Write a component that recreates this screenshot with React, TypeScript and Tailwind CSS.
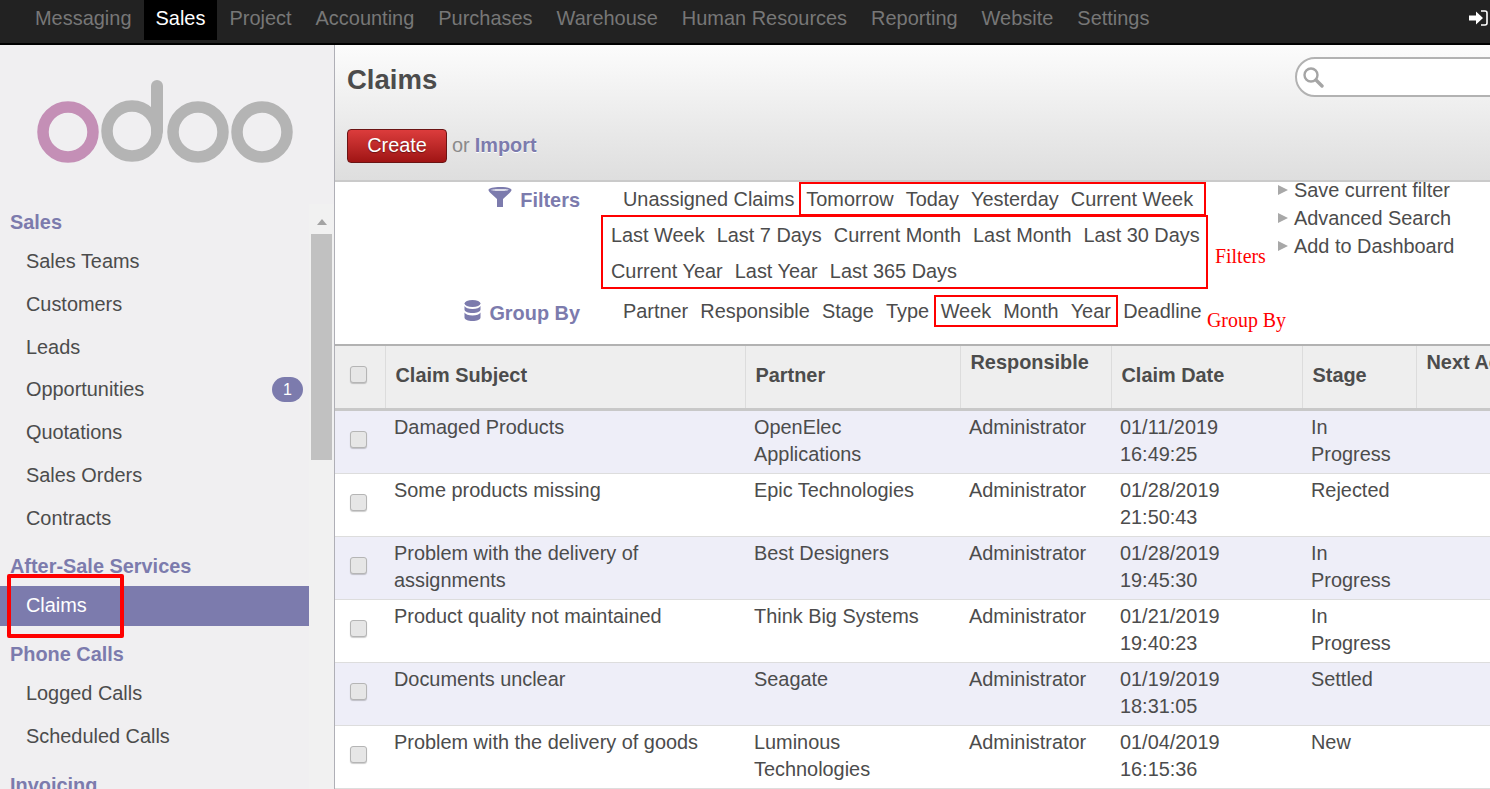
import type { ReactNode } from 'react';

const navItems = ['Messaging', 'Sales', 'Project', 'Accounting', 'Purchases', 'Warehouse', 'Human Resources', 'Reporting', 'Website', 'Settings'];

const menus = [
  { title: 'Sales', items: ['Sales Teams', 'Customers', 'Leads', 'Opportunities', 'Quotations', 'Sales Orders', 'Contracts'] },
  { title: 'After-Sale Services', items: ['Claims'] },
  { title: 'Phone Calls', items: ['Logged Calls', 'Scheduled Calls'] },
  { title: 'Invoicing', items: [] },
];

const claims = [
  ['Damaged Products', 'OpenElec Applications', 'Administrator', '01/11/2019 16:49:25', 'In Progress'],
  ['Some products missing', 'Epic Technologies', 'Administrator', '01/28/2019 21:50:43', 'Rejected'],
  ['Problem with the delivery of assignments', 'Best Designers', 'Administrator', '01/28/2019 19:45:30', 'In Progress'],
  ['Product quality not maintained', 'Think Big Systems', 'Administrator', '01/21/2019 19:40:23', 'In Progress'],
  ['Documents unclear', 'Seagate', 'Administrator', '01/19/2019 18:31:05', 'Settled'],
  ['Problem with the delivery of goods', 'Luminous Technologies', 'Administrator', '01/04/2019 16:15:36', 'New'],
];

function Checkbox() {
  return <span className="block w-[17px] h-[17px] ml-[15px] rounded-[3px] border border-[#b5b5b5] bg-[#e6e6e6] shadow-[0_1px_1px_rgba(0,0,0,0.2)]" />;
}

function Logo() {
  return (
    <svg width="270" height="100" viewBox="0 0 270 100" className="block">
      <g fill="none" strokeWidth="11.5">
        <circle cx="43" cy="58" r="25" stroke="#c48fb6" />
        <g stroke="#b4b4b4">
          <circle cx="107" cy="57" r="25" />
          <path d="M132 57V12" strokeLinecap="round" strokeWidth="12" />
          <circle cx="173" cy="58" r="25" />
          <circle cx="237" cy="58" r="25" />
        </g>
      </g>
    </svg>
  );
}

function Term({ children }: { children: ReactNode }) {
  return <span className="whitespace-nowrap">{children}</span>;
}

function Terms({ items }: { items: string[] }) {
  return (
    <>
      {items.map((t) => (
        <Term key={t}>{t}</Term>
      ))}
    </>
  );
}

function ActionLink({ label }: { label: string }) {
  return (
    <div className="flex items-center h-[28px]">
      <span className="w-0 h-0 mr-[6px] border-y-[5px] border-y-transparent border-l-[10px] border-l-[#a8a8a8]" />
      {label}
    </div>
  );
}

export default function App() {
  return (
    <div className="h-[789px] w-[1490px] overflow-hidden flex flex-col bg-white text-[#4c4c4c] text-[19.9px] leading-[27px]" style={{ fontFamily: '"Liberation Sans", Arial, sans-serif' }}>
      <header className="h-[45px] shrink-0 flex bg-[#222222] border-b-2 border-black pl-[23px] pr-[2px] text-[19.97px]">
        {navItems.map((n) => (
          <a key={n} className={n === 'Sales' ? 'h-[40px] px-3 pb-[3px] flex items-center bg-black text-white' : 'h-[37px] px-3 flex items-center text-[#777777]'}>
            {n}
          </a>
        ))}
        <svg width="20" height="16" viewBox="0 0 20 16" className="ml-auto mt-[10px]">
          <path d="M1 5.500h7V1.500L15 8l-7 6.500v-4H1z" fill="#fff" />
          <path d="M13 1h4a2 2 0 0 1 2 2v10a2 2 0 0 1-2 2h-4" fill="none" stroke="#fff" strokeWidth="1.600" />
        </svg>
      </header>

      <div className="flex flex-1 min-h-0">
        <aside className="relative w-[335px] shrink-0 bg-[#f0eff1] border-r border-[#afafb6] flex flex-col overflow-hidden">
          <div className="h-[159px] shrink-0 pl-[25px] pt-[29px]">
            <Logo />
          </div>
          <div className="flex flex-1 min-h-0">
            <nav className="w-[309px] shrink-0 pt-[5px]">
              {menus.map((m) => (
                <div key={m.title} className={m.title === 'Sales' ? 'mb-[13px]' : 'mb-[15px]'}>
                  <div className="pl-[10px] h-[27px] font-bold text-[#7c7bad]">{m.title}</div>
                  <ul className="mt-[4px]">
                    {m.items.map((i) => (
                      <li key={i} className={i === 'Claims' ? 'h-[40px] mt-[6px] pl-[26px] flex items-center bg-[#7c7bad] text-white' : 'h-[42.83px] pl-[26px] flex items-center justify-between pr-[6px]'}>
                        {i}
                        {i === 'Opportunities' && <span className="w-[31px] h-[25px] rounded-full bg-[#7c7bad] text-white text-[16px] flex items-center justify-center">1</span>}
                      </li>
                    ))}
                  </ul>
                </div>
              ))}
            </nav>
            <div className="w-[25px] shrink-0 bg-[#f1f1f1] flex flex-col items-center pt-[15px]">
              <span className="w-0 h-0 border-x-[5px] border-x-transparent border-b-[6px] border-b-[#a3a3a3]" />
              <span className="mt-[9px] w-[21px] h-[226px] bg-[#c1c1c1]" />
            </div>
          </div>
          <div className="absolute left-[7px] top-[529px] w-[117px] h-[64px] border-4 border-[#ff0000] rounded-[2px]" />
        </aside>

        <main className="flex-1 min-w-0 overflow-hidden relative">
          <div className="h-[137px] border-b-2 border-[#cacaca] bg-gradient-to-b from-[#fcfcfc] to-[#dedede] px-3 pt-[17px] relative">
            <h1 className="text-[27.500px] leading-[36px] font-bold text-[#4c4c4c]">Claims</h1>
            <div className="mt-[31px] flex items-center h-[34px]">
              <button className="w-[100px] h-[34px] pb-[1px] rounded-[4px] border border-[#6b1414] bg-gradient-to-b from-[#dc3c3c] to-[#a01414] text-white [text-shadow:0_1px_1px_rgba(0,0,0,0.4)]">Create</button>
              <span className="ml-[5px] pb-[1px] text-[#8a8a8a]">or</span>
              <a className="ml-[5px] pb-[1px] font-bold text-[#7c7bad] [text-shadow:0_1px_0_#fff]">Import</a>
            </div>
            <div className="absolute left-[960px] top-[12px] w-[300px] h-[40px] rounded-l-[20px] border-2 border-[#b2b2b2] bg-white flex items-center pl-[5px]">
              <svg width="22" height="22" viewBox="0 0 22 22" fill="none" stroke="#a5a5a5">
                <circle cx="9" cy="9" r="6.500" strokeWidth="2.400" />
                <path d="M14 14l6 6" strokeWidth="3.400" strokeLinecap="round" />
              </svg>
            </div>
          </div>

          <section className="h-[162px] flex relative">
            <div className="w-[245px] shrink-0 font-bold text-[#7c7bad]">
              <div className="flex justify-end items-center gap-[8px] mt-[3px] h-[30px]">
                <svg width="24" height="21" viewBox="0 0 24 21" className="-mt-[5px]">
                  <path d="M0.500 3C0.500 1 6 0 12 0s11.500 1 11.500 3c0 1-1 2-2.500 3.500L15 12v8l-6 0V12L3 6.500C1.500 5 0.500 4 0.500 3zM3 3c1.500 1 16.500 1 18 0c-1.500-1-16.500-1-18 0z" fill="#7c7bad" fillRule="evenodd" />
                </svg>
                Filters
              </div>
              <div className="flex justify-end items-center gap-[8px] mt-[83px] h-[30px]">
                <svg width="17" height="22" viewBox="0 0 17 22" fill="#7c7bad" className="-mt-[4px]">
                  <ellipse cx="8.500" cy="3.500" rx="8" ry="3.500" />
                  <path d="M.5 6c1 2 4 3 8 3s7-1 8-3v3.500c0 2-3.500 3.500-8 3.500s-8-1.500-8-3.500z" />
                  <path d="M.5 12.500c1 2 4 3 8 3s7-1 8-3v5c0 2-3.500 3.500-8 3.500s-8-1.500-8-3.500z" />
                </svg>
                Group By
              </div>
            </div>

            <div className="w-[683px] shrink-0 pl-[21px]">
              <div className="flex items-center h-[34px] pl-[22px]">
                <Term>Unassigned Claims</Term>
                <div className="ml-[5px] flex gap-[12.100px] items-center w-[407px] h-[34px] border-2 border-[#ff0000] pl-[5px]">
                  <Terms items={['Tomorrow', 'Today', 'Yesterday', 'Current Week']} />
                </div>
              </div>
              <div className="w-[607px] h-[74px] -mt-[1px] border-2 border-[#ff0000] px-[8px] flex flex-col justify-start">
                <div className="flex gap-[12.100px] h-[36px] shrink-0 items-center">
                  <Terms items={['Last Week', 'Last 7 Days', 'Current Month', 'Last Month', 'Last 30 Days']} />
                </div>
                <div className="flex gap-[12.100px] h-[36px] shrink-0 items-center">
                  <Terms items={['Current Year', 'Last Year', 'Last 365 Days']} />
                </div>
              </div>
              <div className="flex items-center h-[32px] mt-[6px] pl-[22px] gap-[12.100px]">
                <Terms items={['Partner', 'Responsible', 'Stage', 'Type']} />
                <div className="-ml-[7.500px] -mr-[6.800px] flex gap-[12.100px] items-center h-[32px] border-2 border-[#ff0000] px-[5px]">
                  <Terms items={['Week', 'Month', 'Year']} />
                </div>
                <Term>Deadline</Term>
              </div>
            </div>

            <div className="pl-[15px] -mt-[6px] relative">
              <ActionLink label="Save current filter" />
              <ActionLink label="Advanced Search" />
              <ActionLink label="Add to Dashboard" />
            </div>

            <span className="absolute left-[880px] top-[61px] text-[#ff0000]" style={{ fontFamily: '"Liberation Serif", serif' }}>Filters</span>
            <span className="absolute left-[872px] top-[125px] text-[#ff0000]" style={{ fontFamily: '"Liberation Serif", serif' }}>Group By</span>
          </section>

          <table className="w-[1300px] table-fixed border-collapse border-t-2 border-[#b2b2b2]">
            <colgroup>
              <col className="w-[50px]" />
              <col className="w-[360px]" />
              <col className="w-[215px]" />
              <col className="w-[151px]" />
              <col className="w-[191px]" />
              <col className="w-[114px]" />
              <col />
            </colgroup>
            <thead>
              <tr className="h-[64px] bg-[#eeeeee] border-b-[3px] border-[#c8c8c8] text-left font-bold">
                <th className="pb-[4px] border-r border-[#dcdcdc]"><Checkbox /></th>
                <th className="px-[10px] pb-[2px] border-r border-[#dcdcdc] font-bold">Claim Subject</th>
                <th className="px-[10px] pb-[2px] border-r border-[#dcdcdc] font-bold">Partner</th>
                <th className="px-[10px] pt-[3px] align-top border-r border-[#dcdcdc] font-bold">Responsible</th>
                <th className="px-[10px] pb-[2px] border-r border-[#dcdcdc] font-bold">Claim Date</th>
                <th className="px-[10px] pb-[2px] border-r border-[#dcdcdc] font-bold">Stage</th>
                <th className="px-[10px] pt-[3px] align-top font-bold whitespace-nowrap">Next Activity</th>
              </tr>
            </thead>
            <tbody>
              {claims.map((c, i) => (
                <tr key={c[0]} className={i % 2 === 0 ? (i === 0 ? 'h-[64px] bg-[#eeeef8] border-b border-[#dddddd]' : 'h-[63px] bg-[#eeeef8] border-b border-[#dddddd]') : 'h-[63px] bg-white border-b border-[#dddddd]'}>
                  <td className="align-middle pb-[4px]"><Checkbox /></td>
                  {c.map((v) => (
                    <td key={v} className="px-[9px] pt-[3px] pb-[4px] align-top">{v}</td>
                  ))}
                  <td />
                </tr>
              ))}
            </tbody>
          </table>
        </main>
      </div>
    </div>
  );
}
